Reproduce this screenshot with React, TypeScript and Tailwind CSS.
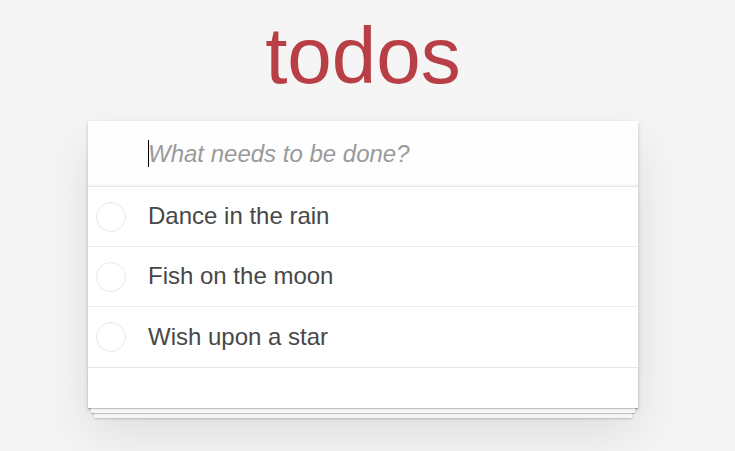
import React, { useState } from "react";

type todoType = { id: number; title: string; completed: boolean };

const initialTodos: todoType[] = [
  { id: 1, title: "Dance in the rain", completed: false },
  { id: 2, title: "Fish on the moon", completed: false },
  { id: 3, title: "Wish upon a star", completed: false },
];

const ToggleCircle: React.FC = () => (
  <svg width="30" height="30" viewBox="0 0 30 30" aria-hidden="true">
    <circle cx="15" cy="15" r="14.5" fill="none" stroke="#e8e8e8" strokeWidth="1" />
  </svg>
);

export default function App() {
  const [todos] = useState<todoType[]>(initialTodos);
  const [text, setText] = useState("");

  return (
    <div className="min-h-screen bg-[#f5f5f5] text-[#4d4d4d] font-['Liberation_Sans',Arial,sans-serif]">
      <div className="w-[726px]">
        <div className="mx-auto w-[550px] pt-[16px]">
          <h1 className="text-center text-[80px] leading-[80px] font-thin text-[#b83f45]">todos</h1>

          <section className="mt-[25px] bg-white shadow-[0_2px_4px_0_rgba(0,0,0,0.2),0_25px_50px_0_rgba(0,0,0,0.1)]">
            <header className="relative">
              <input
                value={text}
                onChange={(e) => setText(e.target.value)}
                placeholder="What needs to be done?"
                className="block w-full h-[65px] pl-[60px] pr-4 text-[24px] bg-[rgba(0,0,0,0.003)] shadow-[inset_0_-2px_1px_rgba(0,0,0,0.03)] outline-none placeholder:italic placeholder:text-[#9a9a9a]"
              />
              {/* text caret as seen in the focused field */}
              {text === "" && <span className="pointer-events-none absolute left-[60px] top-[19px] h-[27px] w-px bg-black" />}
            </header>

            <ul className="border-t border-[#e6e6e6]">
              {todos.map((todo, i) => (
                <li
                  key={todo.id}
                  className={
                    i < todos.length - 1
                      ? "relative flex items-center h-[60px] border-b border-[#ededed]"
                      : "relative flex items-center h-[60px]"
                  }
                >
                  <div className="absolute left-[8px] top-1/2 -translate-y-1/2 flex">
                    <ToggleCircle />
                  </div>
                  <label className="block pl-[60px] pr-[15px] text-[24px] leading-[1.2] text-[#484848]">
                    {todo.title}
                  </label>
                </li>
              ))}
            </ul>

            <footer className="h-[41px] border-t border-[#e6e6e6] shadow-[0_1px_1px_rgba(0,0,0,0.2),0_8px_0_-3px_#f6f6f6,0_9px_1px_-3px_rgba(0,0,0,0.2),0_16px_0_-6px_#f6f6f6,0_17px_2px_-6px_rgba(0,0,0,0.2)]" />
          </section>
        </div>
      </div>
    </div>
  );
}
